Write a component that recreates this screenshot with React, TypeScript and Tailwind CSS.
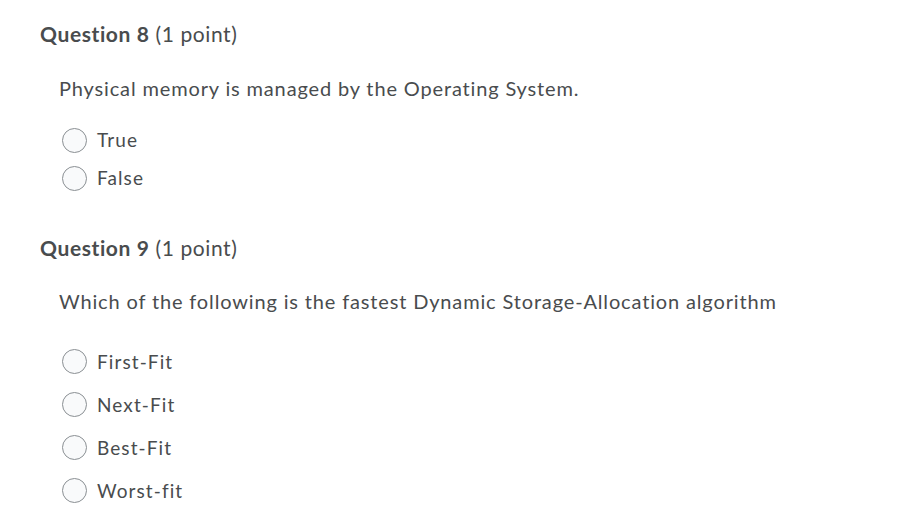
import React from "react";

type Question = {
  num: number;
  prompt: string;
  options: string[];
  promptClass: string;
  listClass: string;
  rowClass: string;
};

const questions: Question[] = [
  {
    num: 8,
    prompt: "Physical memory is managed by the Operating System.",
    options: ["True", "False"],
    promptClass: "mt-[24px]",
    listClass: "mt-[18px]",
    rowClass: "h-[38px]",
  },
  {
    num: 9,
    prompt: "Which of the following is the fastest Dynamic Storage-Allocation algorithm",
    options: ["First-Fit", "Next-Fit", "Best-Fit", "Worst-fit"],
    promptClass: "mt-[23px]",
    listClass: "mt-[24px]",
    rowClass: "h-[43px]",
  },
];

function Radio() {
  return (
    <span className="block h-[25px] w-[25px] shrink-0 rounded-full border border-[#8a8f93] bg-[#f9fafb]" />
  );
}

export default function App() {
  return (
    <div
      className="min-h-[522px] w-[915px] bg-white pl-[40px] pt-[19px] text-[#494c4e] [font-variant-ligatures:none]"
      style={{ fontFamily: "Lato, 'Noto Sans', sans-serif" }}
    >
      {questions.map((q, i) => (
        <div key={q.num} className={i > 0 ? "mt-[36px]" : ""}>
          <h2 className="h-[30px] text-[21px] leading-[30px] tracking-[0.6px]">
            <span className="font-bold">Question {q.num}</span>{" "}
            <span className="font-normal">(1 point)</span>
          </h2>
          <div className="pl-[19px]">
            <p className={`h-[30px] text-[20px] leading-[30px] tracking-[0.85px] ${q.promptClass}`}>
              {q.prompt}
            </p>
            <div className={q.listClass}>
              {q.options.map((opt) => (
                <label key={opt} className={`flex items-center gap-[10px] pl-[3px] ${q.rowClass}`}>
                  <Radio />
                  <span className="text-[19px] leading-[26px] tracking-[1.1px]">{opt}</span>
                </label>
              ))}
            </div>
          </div>
        </div>
      ))}
    </div>
  );
}
